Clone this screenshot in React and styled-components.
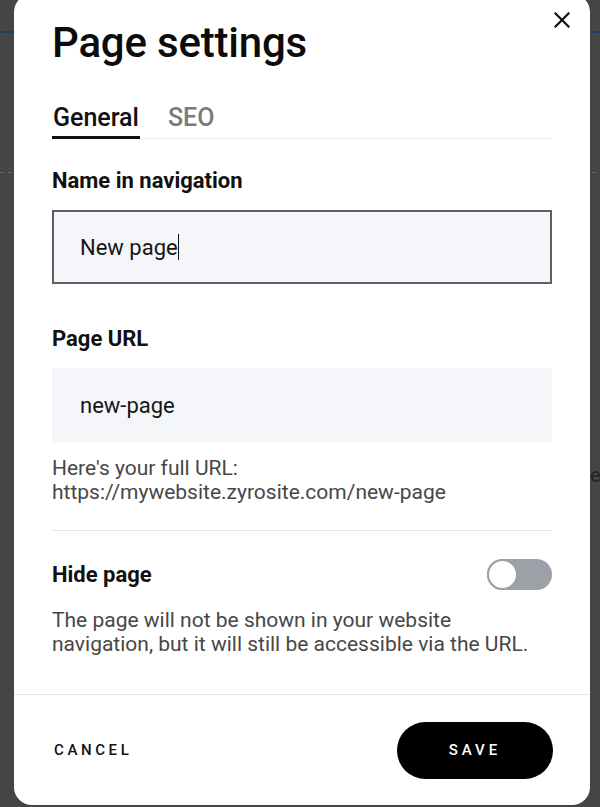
import React from "react";
import styled, { createGlobalStyle } from "styled-components";

const GlobalStyle = createGlobalStyle`
  html, body { margin: 0; padding: 0; }
  body {
    width: 600px;
    height: 807px;
    overflow: hidden;
    background: #454545;
    font-family: Roboto, "Noto Sans", Arial, sans-serif;
    -webkit-font-smoothing: antialiased;
  }
  * { box-sizing: border-box; }
`;

const Backdrop = styled.div`
  position: relative;
  width: 600px;
  height: 807px;
  overflow: hidden;
  background-color: #454545;
  background-image:
    linear-gradient(to bottom, transparent 31px, #223d66 31px, #223d66 33px, transparent 33px),
    repeating-linear-gradient(to right, #6a6a6a 0 4px, transparent 4px 8px);
  background-size: 100% 100%, 100% 1px;
  background-position: 0 0, 0 172px;
  background-repeat: no-repeat;
`;

const PeekText = styled.span`
  position: absolute;
  left: 590px;
  top: 463px;
  font-size: 20px;
  line-height: 24px;
  color: #222;
`;

const Dialog = styled.div`
  position: relative;
  margin: -6px 10px 0 14px;
  width: 576px;
  height: 811px;
  background: #fff;
  border-radius: 18px;
  display: flex;
  flex-direction: column;
`;

const CloseButton = styled.button`
  position: absolute;
  top: 15px;
  right: 17px;
  width: 22px;
  height: 22px;
  padding: 0;
  border: 0;
  background: transparent;
  display: flex;
  align-items: center;
  justify-content: center;
  cursor: pointer;
`;

const Body = styled.div`
  flex: 1;
  padding: 25px 38px 0 38px;
  display: flex;
  flex-direction: column;
  border-bottom: 1px solid #e6e6e6;
`;

const Title = styled.h1`
  margin: 0;
  font-size: 42px;
  line-height: 48px;
  font-weight: 500;
  color: #0c0c0c;
  letter-spacing: -0.2px;
`;

const TabBar = styled.div`
  margin-top: 36px;
  display: flex;
  gap: 27px;
  border-bottom: 1px solid #ececec;
`;

const Tab = styled.div`
  font-size: 25px;
  line-height: 29px;
  font-weight: 500;
  color: ${(p) => (p.$active ? "#111" : "#7a7a7a")};
  padding: 0 1px 4px 1px;
  border-bottom: 3px solid ${(p) => (p.$active ? "#111" : "transparent")};
  margin-bottom: -1px;
`;

const Label = styled.div`
  font-size: 22px;
  line-height: 26px;
  font-weight: 700;
  color: #111;
  margin-top: ${(p) => p.$top}px;
`;

const Field = styled.div`
  margin-top: 16px;
  height: 74px;
  display: flex;
  align-items: center;
  padding: 0 26px;
  background: #f4f6f9;
  border: 2px solid ${(p) => (p.$focused ? "#5c5f63" : "transparent")};
  font-size: 22px;
  color: #151515;
`;

const Caret = styled.span`
  display: inline-block;
  width: 1.5px;
  height: 26px;
  background: #111;
`;

const HelpText = styled.p`
  margin: ${(p) => p.$top}px 0 0 0;
  font-size: 21px;
  line-height: 24px;
  color: #474747;
`;

const Divider = styled.div`
  margin-top: 26px;
  height: 1px;
  background: #e6e6e6;
`;

const ToggleRow = styled.div`
  margin-top: 28px;
  display: flex;
  align-items: center;
  justify-content: space-between;
`;

const ToggleLabel = styled.span`
  font-size: 22px;
  line-height: 26px;
  font-weight: 700;
  color: #111;
`;

const Switch = styled.div`
  width: 65px;
  height: 31px;
  border-radius: 16px;
  background: #9ca1a7;
  display: flex;
  align-items: center;
`;

const Knob = styled.span`
  width: 31px;
  height: 31px;
  border-radius: 50%;
  background: #fff;
  border: 2px solid #9ca1a7;
`;

const Footer = styled.div`
  height: 110px;
  padding: 0 37px 0 40px;
  display: flex;
  align-items: center;
  justify-content: space-between;
`;

const TextButton = styled.button`
  border: 0;
  background: transparent;
  padding: 0;
  font-family: inherit;
  font-size: 15px;
  font-weight: 500;
  letter-spacing: 3.6px;
  color: #111;
  cursor: pointer;
`;

const PrimaryButton = styled.button`
  width: 156px;
  height: 57px;
  border: 0;
  border-radius: 29px;
  background: #000;
  color: #fff;
  font-family: inherit;
  font-size: 15px;
  font-weight: 500;
  letter-spacing: 4px;
  padding-left: 6px;
  cursor: pointer;
`;

export default function App() {
  return (
    <>
      <GlobalStyle />
      <Backdrop>
        <PeekText>er</PeekText>
        <Dialog>
          <CloseButton aria-label="Close">
            <svg width="16" height="16" viewBox="0 0 16 16">
              <path d="M1.5 1.5 L14.5 14.5 M14.5 1.5 L1.5 14.5" stroke="#111" strokeWidth="2.2" strokeLinecap="square" />
            </svg>
          </CloseButton>
          <Body>
            <Title>Page settings</Title>
            <TabBar>
              <Tab $active>General</Tab>
              <Tab>SEO</Tab>
            </TabBar>
            <Label $top={29}>Name in navigation</Label>
            <Field $focused>
              New page<Caret />
            </Field>
            <Label $top={42}>Page URL</Label>
            <Field>new-page</Field>
            <HelpText $top={14}>
              Here's your full URL:
              <br />
              https://mywebsite.zyrosite.com/new-page
            </HelpText>
            <Divider />
            <ToggleRow>
              <ToggleLabel>Hide page</ToggleLabel>
              <Switch>
                <Knob />
              </Switch>
            </ToggleRow>
            <HelpText $top={18}>
              The page will not be shown in your website navigation, but it will still be accessible via the URL.
            </HelpText>
          </Body>
          <Footer>
            <TextButton>CANCEL</TextButton>
            <PrimaryButton>SAVE</PrimaryButton>
          </Footer>
        </Dialog>
      </Backdrop>
    </>
  );
}
